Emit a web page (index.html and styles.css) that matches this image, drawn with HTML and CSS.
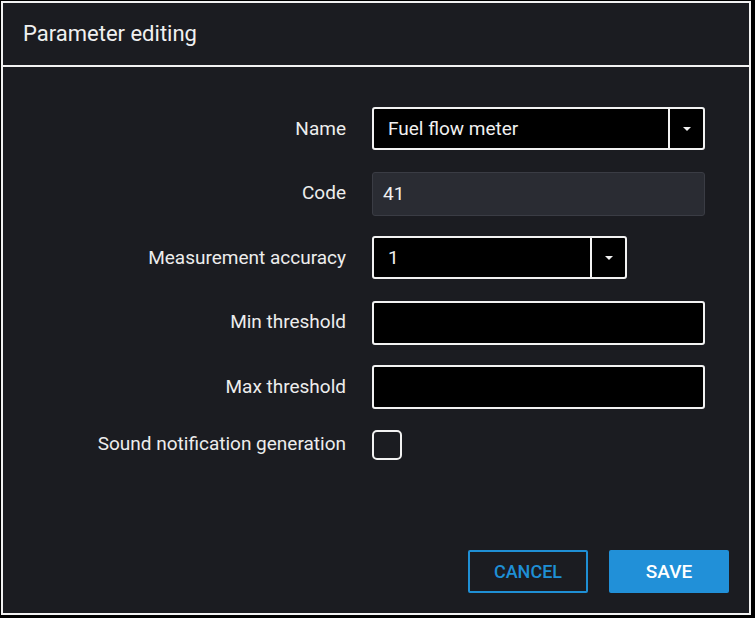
FILE: index.html
```html
<!DOCTYPE html>
<html>
<head>
<meta charset="utf-8">
<link rel="stylesheet" href="styles.css">
</head>
<body>
<div class="dialog">
  <div class="header">Parameter editing</div>
  <div class="body">
    <div class="form">
      <div class="label">Name</div>
      <div class="select wide">
        <div class="value">Fuel flow meter</div>
        <div class="arrow"><span class="tri"></span></div>
      </div>

      <div class="label">Code</div>
      <div class="input readonly">41</div>

      <div class="label">Measurement accuracy</div>
      <div class="select narrow">
        <div class="value">1</div>
        <div class="arrow"><span class="tri"></span></div>
      </div>

      <div class="label">Min threshold</div>
      <div class="input"></div>

      <div class="label">Max threshold</div>
      <div class="input"></div>

      <div class="label check-label">Sound notification generation</div>
      <div class="check-cell"><span class="checkbox"></span></div>
    </div>
    <div class="footer">
      <button class="btn cancel">CANCEL</button>
      <button class="btn save">SAVE</button>
    </div>
  </div>
</div>
</body>
</html>
```
FILE: styles.css
```css
* { box-sizing: border-box; }
html, body { margin: 0; padding: 0; background: #000; }
body {
  width: 755px;
  height: 618px;
  font-family: Roboto, "Liberation Sans", sans-serif;
  color: #ececec;
}
.dialog {
  margin: 1px 0 0 1px;
  width: 750px;
  height: 614px;
  border: 2px solid #f2f2f2;
  background: #1b1c21;
  display: flex;
  flex-direction: column;
}
.header {
  height: 64px;
  border-bottom: 2px solid #f2f2f2;
  padding-left: 20px;
  padding-bottom: 2px;
  display: flex;
  align-items: center;
  font-size: 22px;
  color: #f0f0f0;
}
.body {
  flex: 1;
  display: flex;
  flex-direction: column;
  padding: 40px 20px 20px 0;
}
.form {
  display: grid;
  grid-template-columns: 343px 333px;
  column-gap: 26px;
  row-gap: 20.5px;
  grid-auto-rows: 44px;
}
.label {
  font-size: 19px;
  text-align: right;
  display: flex;
  align-items: center;
  justify-content: flex-end;
  padding-bottom: 2px;
  color: #ededed;
}
.select {
  display: flex;
  border: 2px solid #f2f2f2;
  border-radius: 3px;
  background: #000;
  height: 43px;
}
.select.narrow { width: 255px; }
.select .value {
  flex: 1;
  display: flex;
  align-items: center;
  padding-left: 14px;
  font-size: 19px;
  color: #f0f0f0;
}
.select .arrow {
  width: 35px;
  border-left: 2px solid #f2f2f2;
  display: flex;
  align-items: center;
  justify-content: center;
}
.tri {
  width: 0;
  height: 0;
  border-left: 4px solid transparent;
  border-right: 4px solid transparent;
  border-top: 4px solid #f2f2f2;
}
.input {
  border: 2px solid #f2f2f2;
  border-radius: 3px;
  background: #000;
  height: 44px;
  display: flex;
  align-items: center;
  padding-left: 9px;
  font-size: 19px;
  color: #f0f0f0;
}
.input.readonly {
  background: #2a2c33;
  border: 1px solid #3a3c44;
  padding-left: 10px;
}
.check-label { align-items: center; height: 30px; }
.check-cell {
  display: flex;
  align-items: flex-start;
  height: 30px;
}
.checkbox {
  width: 30px;
  height: 30px;
  border: 2px solid #f2f2f2;
  border-radius: 5px;
}
.footer {
  margin-top: auto;
  display: flex;
  justify-content: flex-end;
  gap: 21px;
}
.btn {
  width: 120px;
  height: 43px;
  border-radius: 2px;
  font-family: Roboto, "Liberation Sans", sans-serif;
  font-size: 19px;
  font-weight: 500;
  letter-spacing: 0;
  cursor: pointer;
}
.cancel {
  background: transparent;
  border: 2px solid #1f8fd5;
  color: #1f8fd5;
  font-size: 18px;
}
.save {
  background: #2190d8;
  border: none;
  color: #fff;
}
```
